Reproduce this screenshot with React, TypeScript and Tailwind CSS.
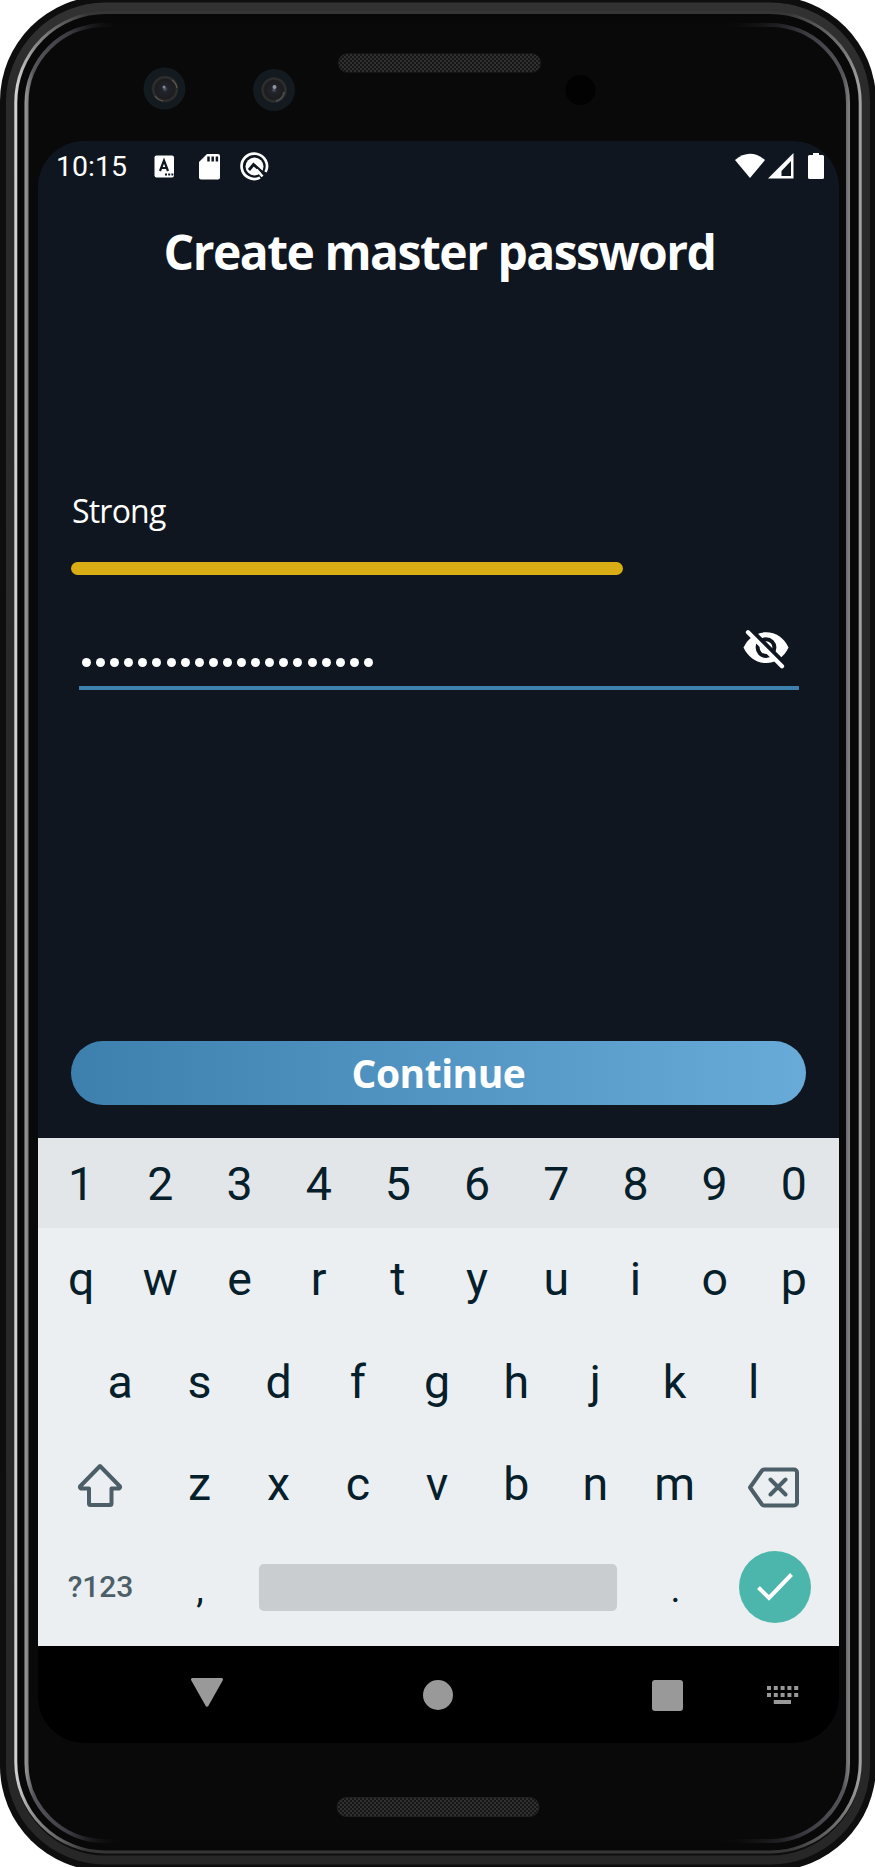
import React from "react";

const digits = ["1", "2", "3", "4", "5", "6", "7", "8", "9", "0"];
const topRow = ["q", "w", "e", "r", "t", "y", "u", "i", "o", "p"];
const homeRow = ["a", "s", "d", "f", "g", "h", "j", "k", "l"];
const bottomRow = ["z", "x", "c", "v", "b", "n", "m"];

function DeviceFrame() {
  return (
    <svg className="absolute inset-0" width="875" height="1867" viewBox="0 0 875 1867" fill="none" aria-hidden="true">
      <defs>
        <linearGradient id="edge" x1="0" x2="875" y1="0" y2="0" gradientUnits="userSpaceOnUse">
          <stop offset="0.018" stopColor="#d2d2d2" />
          <stop offset="0.04" stopColor="#8a8a8a" />
          <stop offset="0.1" stopColor="#363636" />
          <stop offset="0.9" stopColor="#363636" />
          <stop offset="0.965" stopColor="#777" />
          <stop offset="0.985" stopColor="#a5a5a5" />
        </linearGradient>
        <linearGradient id="glass" x1="0" x2="875" y1="0" y2="0" gradientUnits="userSpaceOnUse">
          <stop offset="0.028" stopColor="#9c9c9c" />
          <stop offset="0.038" stopColor="#55555c" />
          <stop offset="0.08" stopColor="#3a3a41" />
          <stop offset="0.14" stopColor="#09090a" stopOpacity="0" />
          <stop offset="0.82" stopColor="#09090a" stopOpacity="0" />
          <stop offset="0.92" stopColor="#3a3a41" />
          <stop offset="0.964" stopColor="#55555c" />
          <stop offset="0.975" stopColor="#9c9c9c" />
        </linearGradient>
        <linearGradient id="rim" x1="0" x2="0" y1="0" y2="1867" gradientUnits="userSpaceOnUse">
          <stop offset="0" stopColor="#323232" />
          <stop offset="0.05" stopColor="#2a2a2a" />
          <stop offset="1" stopColor="#272727" />
        </linearGradient>
        <pattern id="mesh" width="4" height="4" patternUnits="userSpaceOnUse">
          <rect width="4" height="4" fill="#161616" />
          <circle cx="1" cy="1" r="0.9" fill="#3c3c3c" />
          <circle cx="3" cy="3" r="0.9" fill="#3c3c3c" />
        </pattern>
        <radialGradient id="lens">
          <stop offset="0" stopColor="#5a6070" />
          <stop offset="0.2" stopColor="#22242c" />
          <stop offset="0.7" stopColor="#1d1d1f" />
          <stop offset="0.85" stopColor="#323232" />
          <stop offset="1" stopColor="#12171b" />
        </radialGradient>
      </defs>
      <rect x="0" y="-4" width="876" height="1875" rx="105" fill="#0e0e0e" />
      <rect x="10.5" y="7" width="855" height="1853" rx="95" stroke="url(#rim)" strokeWidth="9" />
      <rect x="15.8" y="12.500" width="844.4" height="1839.500" rx="90" stroke="url(#edge)" strokeWidth="3" fill="#080808" />
      <rect x="26.500" y="25" width="821.500" height="1816" rx="78" stroke="url(#glass)" strokeWidth="4" fill="#090909" />
      <rect x="338" y="53.500" width="203" height="19" rx="9.5" fill="url(#mesh)" stroke="#151515" />
      <rect x="337" y="1797.500" width="202" height="19" rx="9.5" fill="url(#mesh)" stroke="#202020" />
      <circle cx="164.5" cy="88.5" r="21" fill="#141b20" />
      <circle cx="165" cy="89" r="14" fill="url(#lens)" />
      <path d="M155 96a12 12 0 0 0 8 5M172 80a12 12 0 0 1 5 8" stroke="#62584f" strokeWidth="1.2" />
      <circle cx="164" cy="87" r="1.5" fill="#8583a0" />
      <circle cx="274" cy="90" r="21" fill="#141b20" />
      <circle cx="274" cy="90" r="13.5" fill="url(#lens)" />
      <path d="M284 92a10 10 0 0 1-8 9" stroke="#4b4b4b" strokeWidth="2" />
      <circle cx="274.5" cy="87" r="2" fill="#9296a2" />
      <circle cx="580.5" cy="90" r="15" fill="#020203" />
    </svg>
  );
}

function StatusBar() {
  return (
    <div className="flex h-[52px] items-center justify-between pl-[18px] pr-[14px] text-white">
      <div className="flex items-center">
        <span className="w-[98px] pt-[1px] font-[Roboto,sans-serif] text-[28.500px] leading-none">10:15</span>
        <svg width="118" height="36" viewBox="0 0 118 36" fill="white" aria-hidden="true">
          <rect x="0.5" y="6.5" width="19.5" height="22" rx="2" />
          <path d="M6 22 10 11.5 14 22M7.5 19h5" stroke="#0f1620" strokeWidth="2.2" fill="none" />
          <path d="M11 25.5h2m1.2 0h2m1.2 0h2" stroke="#0f1620" strokeWidth="1.8" />
          <path d="M53 5H64a2 2 0 0 1 2 2V28.500a2 2 0 0 1-2 2H47a2 2 0 0 1-2-2V13Z" />
          <path d="M54.500 7.500v5m4.200-5v5m4.200-5v5" stroke="#0f1620" strokeWidth="2.500" />
          <path d="M106 28.600A12.700 12.700 0 1 1 111.600 23" fill="none" stroke="white" strokeWidth="2.700" />
          <circle cx="100.500" cy="17.500" r="9" />
          <path d="m95 21 4.500-5.500 9 8" stroke="#0f1620" strokeWidth="2.800" fill="none" />
          <path d="m102.500 20.500 6 7" stroke="white" strokeWidth="2.600" />
        </svg>
      </div>
      <svg width="90" height="32" viewBox="0 0 90 32" fill="white" aria-hidden="true">
        <path d="M0 9Q15-3.500 30 9L15 27Z" />
        <path d="M58.500 2V27.500H33Z" />
        <path d="M56 10V25H46.500V20Z" fill="#0f1620" />
        <path d="M78 2h6v2h3.500a1.500 1.500 0 0 1 1.500 1.500V26.500a1.500 1.500 0 0 1-1.500 1.500h-13a1.500 1.500 0 0 1-1.500-1.500V5.500A1.500 1.500 0 0 1 74.500 4H78Z" />
      </svg>
    </div>
  );
}

function EyeOff() {
  return (
    <svg width="58" height="50" viewBox="0 0 58 50" fill="none" aria-hidden="true">
      <path d="M5.500 25.500C10 16 18 10.300 28 10.300S46 16 50.500 25.500C46 35 38 41 28 41S10 35 5.500 25.500Z" fill="white" />
      <circle cx="28" cy="25.600" r="8.400" stroke="#0f1620" strokeWidth="4" />
      <path d="m12.500 7.500 34 34" stroke="#0f1620" strokeWidth="4.500" />
      <path d="m10 10.200 34 34" stroke="white" strokeWidth="4.300" strokeLinecap="round" />
    </svg>
  );
}

function Key({ label }: { label: string }) {
  return <button className="flex h-full w-[79.200px] items-center justify-center">{label}</button>;
}

function Keyboard() {
  return (
    <div className="flex h-[508px] flex-col bg-[#ebeff2] font-[Roboto,sans-serif] text-[46.500px] leading-none text-[#05202b]">
      <div className="flex h-[90px] justify-center bg-[#e3e6e9] pb-px pr-[2px] pt-[3px]">
        {digits.map((k) => <Key key={k} label={k} />)}
      </div>
      <div className="flex h-[102.500px] justify-center pr-[2px]">
        {topRow.map((k) => <Key key={k} label={k} />)}
      </div>
      <div className="flex h-[102.500px] justify-center pr-[3px]">
        {homeRow.map((k) => <Key key={k} label={k} />)}
      </div>
      <div className="flex h-[103px] justify-center pr-[3px]">
        <button className="flex w-[119px] items-center justify-center">
          <svg width="50" height="48" viewBox="0 0 50 48" fill="none" stroke="#4c5f68" strokeWidth="4" strokeLinejoin="round" aria-hidden="true">
            <path d="M25 5 45 25.500a1.500 1.500 0 0 1-1 2H36.500V42.500a1.500 1.500 0 0 1-1.500 1.500H15.500a1.500 1.500 0 0 1-1.500-1.500V27.500H6a1.500 1.500 0 0 1-1-2Z" />
          </svg>
        </button>
        {bottomRow.map((k) => <Key key={k} label={k} />)}
        <button className="flex w-[119px] items-center justify-center pt-[7px]">
          <svg width="54" height="44" viewBox="0 0 54 44" fill="none" stroke="#4c5f68" strokeWidth="4" strokeLinejoin="round" strokeLinecap="round" aria-hidden="true">
            <path d="M17 3.500H47a3 3 0 0 1 3 3v30a3 3 0 0 1-3 3H17a2.500 2.500 0 0 1-2-1L3 21.500 15 4.500a2.500 2.500 0 0 1 2-1ZM23.500 13.500l15 15m0-15-15 15" />
          </svg>
        </button>
      </div>
      <div className="flex h-[102px] items-center pl-[3px]">
        <button className="w-[119px] text-[30px] font-medium text-[#4c5f68]">?123</button>
        <button className="w-[80px] pt-[4px] text-[38px]">,</button>
        <div className="mx-[19px] h-[47px] w-[358px] shrink-0 rounded-[5px] bg-[#c9cdd0]" />
        <button className="w-[79px] pt-[4px] text-[38px]">.</button>
        <div className="flex w-[119px] shrink-0 justify-center">
          <button className="flex size-[72px] items-center justify-center rounded-full bg-[#4db6ac]">
            <svg width="36" height="28" viewBox="0 0 36 28" fill="none" stroke="white" strokeWidth="4" aria-hidden="true">
              <path d="M1.500 14.500 12 25 34.500 1.500" />
            </svg>
          </button>
        </div>
      </div>
    </div>
  );
}

function NavBar() {
  return (
    <div className="flex h-[97px] items-center bg-black pl-[152px]">
      <svg width="34" height="32" viewBox="0 0 34 32" fill="#999" className="mb-[4px]" aria-hidden="true">
        <path d="M2.500 1H31.500a1.500 1.500 0 0 1 1.300 2.300L18.300 29a1.500 1.500 0 0 1-2.600 0L1.200 3.300A1.500 1.500 0 0 1 2.500 1Z" />
      </svg>
      <div className="ml-[199px] size-[30px] rounded-full bg-[#999]" />
      <div className="ml-[199px] mt-[1px] size-[31px] rounded-[3px] bg-[#999]" />
      <svg width="32" height="20" viewBox="0 0 32 20" className="ml-[84px] mt-[1px]" aria-hidden="true">
        <path d="M0 3H4M6.800 3h4M13.600 3h4M20.400 3h4M27.200 3h4M0 10H4M6.800 10h4M13.600 10h4M20.400 10h4M27.200 10h4M6.800 17H24" stroke="#999" strokeWidth="3.800" />
      </svg>
    </div>
  );
}

export default function App() {
  return (
    <div className="relative h-[1867px] w-[875px] overflow-hidden bg-white">
      <DeviceFrame />
      <main className="relative pl-[38px] pt-[141px]">
        <div className="flex h-[1602px] w-[801px] flex-col overflow-hidden rounded-[46px] bg-[#0f1620]">
          <StatusBar />
          <h1 className="mt-[26px] h-[72px] whitespace-nowrap pl-[2px] text-center font-['Open_Sans','Noto_Sans',sans-serif] text-[48px] leading-[66px] font-bold tracking-[-1.500px] text-white">
            Create master password
          </h1>
          <section className="mt-[196px] px-[33px] font-['Open_Sans','Noto_Sans',sans-serif] text-white">
            <p className="h-[48px] pl-px text-[32px] leading-[48px] tracking-[-0.800px]">Strong</p>
            <div className="mt-[27px] h-[12.500px] w-[552px] rounded-full bg-[#d9ae14]" />
            <div className="ml-[8px] mt-[41px] flex h-[74px] w-[720px] items-start justify-between border-b-4 border-[#3d80ae]">
              <div className="flex gap-[5.100px] pl-[3px] pt-[42px]">
                {Array.from({ length: 21 }, (_, i) => (
                  <span key={i} className="size-[9px] shrink-0 rounded-full bg-white" />
                ))}
              </div>
              <div className="mr-[3px] mt-[6px]"><EyeOff /></div>
            </div>
          </section>
          <button className="ml-[33px] mt-[351px] h-[64px] w-[735px] shrink-0 rounded-full bg-linear-to-r from-[#3d80ae] to-[#68abd8] font-['Open_Sans','Noto_Sans',sans-serif] text-[39px] leading-[60px] font-bold tracking-[-0.500px] text-white">
            Continue
          </button>
          <div className="mt-auto">
            <Keyboard />
            <NavBar />
          </div>
        </div>
      </main>
    </div>
  );
}
